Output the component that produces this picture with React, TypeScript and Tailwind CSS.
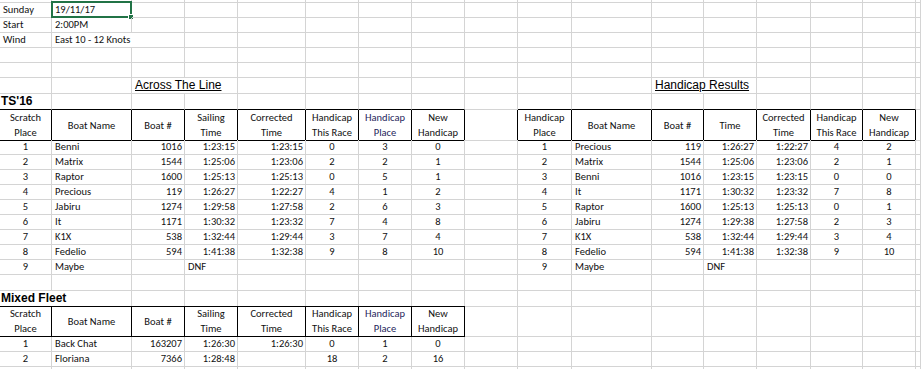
import React from 'react';

type C = {
  t?: React.ReactNode;
  a?: 'l' | 'r' | 'c';
  span?: number;
  h?: boolean;
  bb?: boolean;
  br?: boolean;
  k?: 'title' | 'bold';
  sel?: boolean;
  navy?: boolean;
};
type R = { h: string; cells: C[] };

const GRID =
  'grid grid-cols-[52px_80px_53px_53px_68px_53px_53px_53px_53px_54px_80px_52px_53px_54px_52px_53px_1fr]';

const B = (): C => ({});
const Lt = (t?: React.ReactNode): C => ({ t, a: 'l' });
const Rt = (t?: React.ReactNode): C => ({ t, a: 'r' });
const Ct = (t?: React.ReactNode): C => ({ t, a: 'c' });
const H = (a: string, b?: string, navy?: boolean): C => ({
  h: true,
  navy,
  t: b ? (
    <>
      {a}
      <br />
      {b}
    </>
  ) : (
    a
  ),
});
const BB = (c: C = {}): C => ({ ...c, bb: true });

function pad(cells: C[]): C[] {
  let n = cells.reduce((s, c) => s + (c.span ?? 1), 0);
  const out = [...cells];
  while (n < 17) {
    out.push(B());
    n++;
  }
  return out;
}

const leftData: string[][] = [
  ['1', 'Benni', '1016', '1:23:15', '1:23:15', '0', '3', '0'],
  ['2', 'Matrix', '1544', '1:25:06', '1:23:06', '2', '2', '1'],
  ['3', 'Raptor', '1600', '1:25:13', '1:25:13', '0', '5', '1'],
  ['4', 'Precious', '119', '1:26:27', '1:22:27', '4', '1', '2'],
  ['5', 'Jabiru', '1274', '1:29:58', '1:27:58', '2', '6', '3'],
  ['6', 'It', '1171', '1:30:32', '1:23:32', '7', '4', '8'],
  ['7', 'K1X', '538', '1:32:44', '1:29:44', '3', '7', '4'],
  ['8', 'Fedelio', '594', '1:41:38', '1:32:38', '9', '8', '10'],
];
const rightData: string[][] = [
  ['1', 'Precious', '119', '1:26:27', '1:22:27', '4', '2'],
  ['2', 'Matrix', '1544', '1:25:06', '1:23:06', '2', '1'],
  ['3', 'Benni', '1016', '1:23:15', '1:23:15', '0', '0'],
  ['4', 'It', '1171', '1:30:32', '1:23:32', '7', '8'],
  ['5', 'Raptor', '1600', '1:25:13', '1:25:13', '0', '1'],
  ['6', 'Jabiru', '1274', '1:29:38', '1:27:58', '2', '3'],
  ['7', 'K1X', '538', '1:32:44', '1:29:44', '3', '4'],
  ['8', 'Fedelio', '594', '1:41:38', '1:32:38', '9', '10'],
];

const leftCells = (d: string[]): C[] => [
  Ct(d[0]),
  Lt(d[1]),
  Rt(d[2]),
  Rt(d[3]),
  Rt(d[4]),
  Ct(d[5]),
  Ct(d[6]),
  Ct(d[7]),
];
const rightCells = (d: string[]): C[] => [
  Ct(d[0]),
  Lt(d[1]),
  Rt(d[2]),
  Rt(d[3]),
  Rt(d[4]),
  Ct(d[5]),
  Ct(d[6]),
];

const leftHeader = (): C[] => [
  H('Scratch', 'Place'),
  H('Boat Name'),
  H('Boat #'),
  H('Sailing', 'Time'),
  H('Corrected', 'Time'),
  H('Handicap', 'This Race'),
  H('Handicap', 'Place', true),
  H('New', 'Handicap'),
];
const rightHeader = (): C[] => [
  H('Handicap', 'Place'),
  H('Boat Name'),
  H('Boat #'),
  H('Time'),
  H('Corrected', 'Time'),
  H('Handicap', 'This Race'),
  H('New', 'Handicap'),
];

const rows: R[] = [
  { h: 'h-[3px]', cells: pad([]) },
  { h: 'h-[15px]', cells: pad([Lt('Sunday'), { ...Lt('19/11/17'), sel: true }]) },
  { h: 'h-[15px]', cells: pad([Lt('Start'), Lt('2:00PM')]) },
  { h: 'h-[15px]', cells: pad([Lt('Wind'), { ...Lt('East 10 - 12 Knots'), span: 2 }]) },
  { h: 'h-[15px]', cells: pad([]) },
  { h: 'h-[15px]', cells: pad([]) },
  {
    h: 'h-[16px]',
    cells: pad([
      B(),
      B(),
      { t: 'Across The Line', a: 'l', span: 2, k: 'title' },
      B(),
      B(),
      B(),
      B(),
      B(),
      B(),
      B(),
      { t: 'Handicap Results', a: 'l', span: 2, k: 'title' },
    ]),
  },
  {
    h: 'h-[16px]',
    cells: pad([
      BB({ t: "TS'16", a: 'l', k: 'bold' }),
      BB(),
      BB(),
      BB(),
      BB(),
      BB(),
      BB(),
      BB(),
      B(),
      BB(),
      BB(),
      BB(),
      BB(),
      BB(),
      BB(),
      BB(),
    ]),
  },
  { h: 'h-[30px]', cells: pad([...leftHeader(), { br: true }, ...rightHeader()]) },
  ...leftData.map((d, i) => ({
    h: 'h-[15px]',
    cells: pad([...leftCells(d), B(), ...rightCells(rightData[i])]),
  })),
  {
    h: 'h-[15px]',
    cells: pad([
      Ct('9'),
      Lt('Maybe'),
      B(),
      Lt('DNF'),
      B(),
      B(),
      B(),
      B(),
      B(),
      Ct('9'),
      Lt('Maybe'),
      B(),
      Lt('DNF'),
    ]),
  },
  { h: 'h-[16px]', cells: pad([]) },
  {
    h: 'h-[15px]',
    cells: pad([
      BB({ t: 'Mixed Fleet', a: 'l', k: 'bold', span: 2 }),
      BB(),
      BB(),
      BB(),
      BB(),
      BB(),
      BB(),
    ]),
  },
  { h: 'h-[31px]', cells: pad(leftHeader()) },
  {
    h: 'h-[15px]',
    cells: pad(leftCells(['1', 'Back Chat', '163207', '1:26:30', '1:26:30', '0', '1', '0'])),
  },
  {
    h: 'h-[15px]',
    cells: pad(leftCells(['2', 'Floriana', '7366', '1:28:48', '', '18', '2', '16'])),
  },
  { h: 'h-[15px]', cells: pad([]) },
];

const span2 = 'col-span-2';

function CellView({ c }: { c: C }) {
  const rColor = c.h || c.br ? 'border-r-black' : 'border-r-[#d4d4d4]';
  const bColor = c.h || c.bb ? 'border-b-black' : 'border-b-[#d4d4d4]';
  const spanCls = c.span === 2 ? span2 : '';
  const base = `relative border-r border-b ${rColor} ${bColor} ${spanCls} min-w-0`;

  if (c.h) {
    return (
      <div
        className={`${base} flex items-center justify-center text-center leading-[15px] ${
          c.navy ? 'text-[#1f1f5c]' : 'text-[#111]'
        }`}
      >
        <span>{c.t}</span>
      </div>
    );
  }

  const align =
    c.a === 'r' ? 'justify-end pr-[2px]' : c.a === 'c' ? 'justify-center' : 'justify-start pl-[3px]';

  if (c.k === 'title') {
    return (
      <div className={`${base} flex items-end ${align} pl-[2px]`}>
        <span className="font-['Liberation_Sans',Arial,sans-serif] text-[12px] leading-[15px] underline underline-offset-[1px] whitespace-nowrap text-black">
          {c.t}
        </span>
      </div>
    );
  }
  if (c.k === 'bold') {
    return (
      <div className={`${base} flex items-end justify-start pl-[1px]`}>
        <span className="font-['Liberation_Sans',Arial,sans-serif] text-[12px] leading-[15px] font-bold whitespace-nowrap text-black">
          {c.t}
        </span>
      </div>
    );
  }

  return (
    <div className={`${base} flex items-start ${align} overflow-visible`}>
      <span className="leading-[14px] whitespace-nowrap text-[#111]">{c.t}</span>
      {c.sel && (
        <div className="absolute -left-[1px] -top-[2px] -right-[1px] -bottom-[1px] border-2 border-[#217346] pointer-events-none">
          <div className="absolute -right-[4px] -bottom-[4px] w-[6px] h-[6px] bg-[#217346] border border-white" />
        </div>
      )}
    </div>
  );
}

export default function App() {
  return (
    <div className="w-[921px] h-[369px] overflow-hidden bg-white font-['Carlito','Lato',sans-serif] text-[10.5px] text-[#111]">
      {rows.map((r, i) => (
        <div key={i} className={`${GRID} ${r.h}`}>
          {r.cells.map((c, j) => (
            <CellView key={j} c={c} />
          ))}
        </div>
      ))}
    </div>
  );
}
